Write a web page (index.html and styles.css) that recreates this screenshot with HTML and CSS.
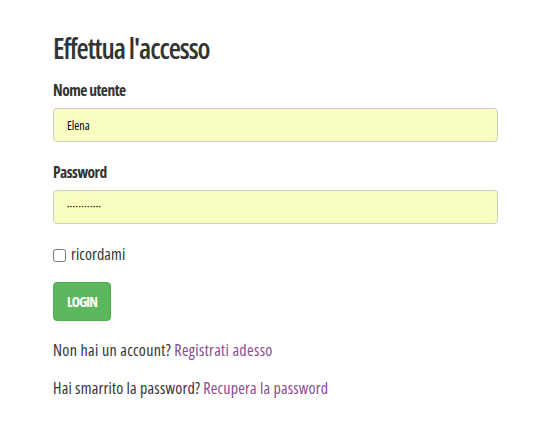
FILE: index.html
```html
<!DOCTYPE html>
<html lang="it">
<head>
<meta charset="utf-8">
<title>Effettua l'accesso</title>
<link rel="stylesheet" href="styles.css">
</head>
<body>
<main class="login">
  <h1 class="title">Effettua l'accesso</h1>
  <form class="form">
    <div class="group">
      <label class="label" for="user">Nome utente</label>
      <input class="input" id="user" type="text" value="Elena">
    </div>
    <div class="group">
      <label class="label" for="pass">Password</label>
      <input class="input pass" id="pass" type="password" value="elenapasswd1">
    </div>
    <label class="check"><input type="checkbox" class="box"><span>ricordami</span></label>
    <button type="button" class="btn">LOGIN</button>
  </form>
  <p class="note">Non hai un account? <a href="#" class="link">Registrati adesso</a></p>
  <p class="note note2">Hai smarrito la password? <a href="#" class="link">Recupera la password</a></p>
</main>
</body>
</html>
```
FILE: styles.css
```css
html, body { margin: 0; padding: 0; background: #fff; }
body {
  font-family: "Open Sans", "Liberation Sans", sans-serif;
  font-stretch: 75%;
  color: #333;
  font-size: 16px;
}
.login { padding: 31px 48px 0 53px; }
.title {
  font-size: 28px; font-weight: 600; margin: 0 0 15px; line-height: 34px;
  letter-spacing: -1.1px; color: #333;
}
.form { display: flex; flex-direction: column; align-items: flex-start; }
.group { width: 100%; margin-bottom: 20px; }
.label {
  display: block; font-weight: 700; font-size: 15.5px; margin-bottom: 8px;
  line-height: 20px; letter-spacing: -0.5px;
}
.input {
  display: block; box-sizing: border-box; width: 100%; height: 34px; margin: 0;
  background: #fafdc0; border: 1px solid #ccc; border-radius: 4px;
  padding: 0 13px; font-family: inherit; font-stretch: 75%; font-size: 12px; color: #000;
  outline: none;
}
.pass { font-size: 6px; letter-spacing: 0.6px; color: #111; }
.check {
  display: flex; align-items: flex-start; gap: 5px; font-size: 16px;
  line-height: 20px; letter-spacing: 0.1px;
}
.box { margin: 5px 0 0; width: 13px; height: 13px; }
.btn {
  margin-top: 18px; height: 39px; padding: 0 13px;
  background: #5cb85c; border: 1px solid #4cae4c; border-radius: 4px;
  color: #fff; font-family: inherit; font-stretch: 75%; font-weight: 700; font-size: 14px;
  letter-spacing: -0.9px;
}
.note { margin: 19px 0 0; font-size: 16px; line-height: 20px; letter-spacing: 0.33px; }
.note2 { margin-top: 18px; letter-spacing: 0.2px; }
.link { color: #8a4a8e; text-decoration: none; }
```
